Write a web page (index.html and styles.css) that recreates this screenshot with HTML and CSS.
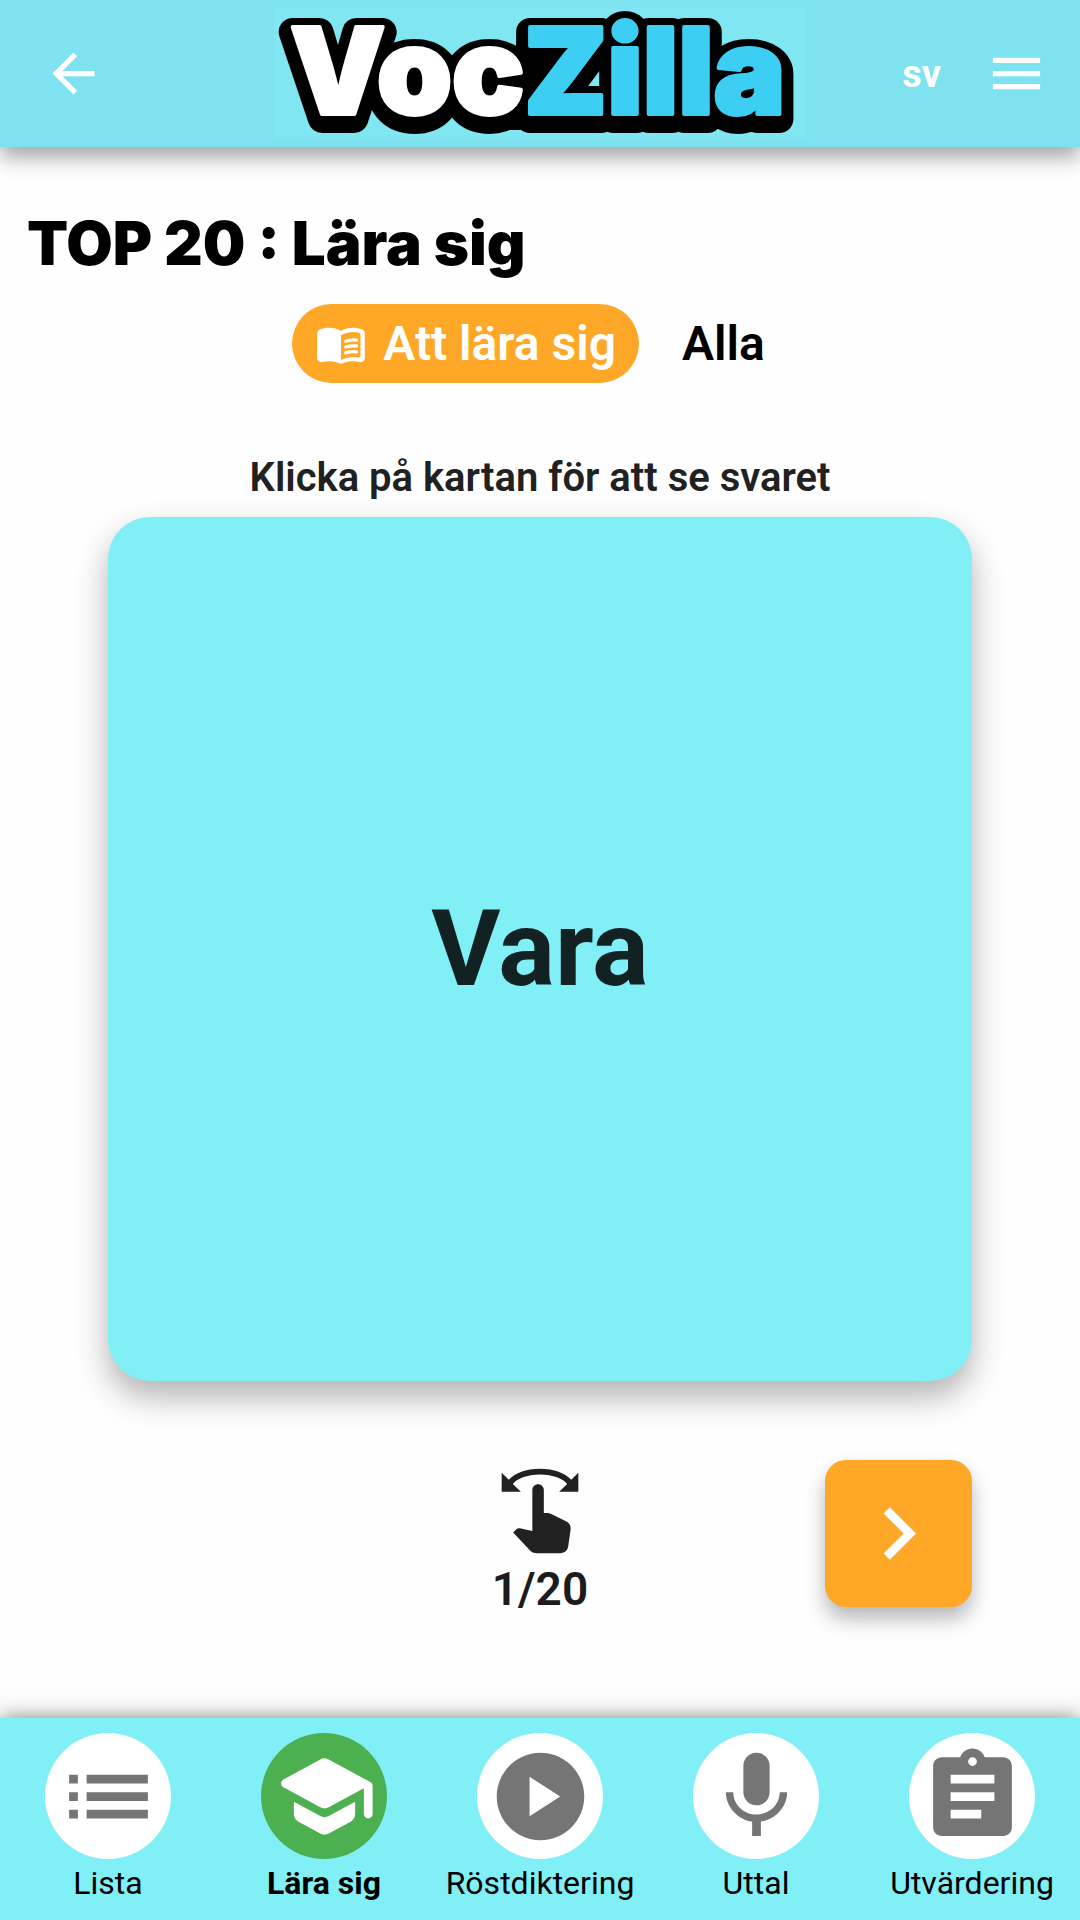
FILE: index.html
```html
<!DOCTYPE html>
<html lang="sv">
<head>
<meta charset="utf-8">
<meta name="viewport" content="width=device-width, initial-scale=1">
<title>VocZilla</title>
<link rel="stylesheet" href="styles.css">
</head>
<body>
<header class="topbar">
  <button class="icon-button back" type="button" aria-label="Tillbaka">
    <svg class="icon" viewBox="0 0 24 24"><path d="M20 11H7.83l5.59-5.59L12 4l-8 8 8 8 1.41-1.41L7.83 13H20v-2z"/></svg>
  </button>
  <svg class="logo" viewBox="0 0 532 131" role="img" aria-label="VocZilla">
    <defs>
      <text id="voc" x="16" y="106">Voc</text>
      <text id="zilla" x="250" y="106">Zilla</text>
    </defs>
    <g class="logo-shade">
      <use href="#voc" y="5"/>
      <use href="#zilla" y="5"/>
      <path d="M220 60h40v48h-40z"/>
    </g>
    <use class="logo-white" href="#voc"/>
    <use class="logo-blue" href="#zilla"/>
  </svg>
  <div class="topbar-end">
    <button class="language" type="button">sv</button>
    <button class="icon-button" type="button" aria-label="Meny">
      <svg class="icon" viewBox="0 0 24 24"><path d="M3 18h18v-2H3v2zm0-5h18v-2H3v2zm0-7v2h18V6H3z"/></svg>
    </button>
  </div>
</header>

<main class="content">
  <h1 class="title">TOP 20 : Lära sig</h1>
  <div class="filters">
    <button class="filter filter-active" type="button">
      <svg class="filter-icon" viewBox="0 0 24 24">
        <path d="M17.5 4.5c-1.95 0-4.05.4-5.5 1.5-1.45-1.1-3.55-1.5-5.5-1.5-1.45 0-2.99.22-4.28.79C1.49 5.62 1 6.33 1 7.14v11.28c0 1.3 1.22 2.26 2.48 1.94.98-.25 2.02-.36 3.02-.36 1.56 0 3.22.26 4.56.92.6.3 1.28.3 1.87 0 1.34-.67 3-.92 4.56-.92 1 0 2.04.11 3.02.36 1.26.33 2.48-.63 2.48-1.94V7.14c0-.81-.49-1.52-1.22-1.85-1.28-.57-2.82-.79-4.27-.79zM21 17.23c0 .63-.58 1.09-1.2.98-.75-.14-1.53-.2-2.3-.2-1.7 0-4.15.65-5.5 1.5V8c1.35-.85 3.8-1.5 5.5-1.5.92 0 1.83.09 2.7.28.46.1.8.51.8.98v9.47z"/>
        <path class="filter-lines" d="M14.2 10.7q2.5-.8 5-.5M14.2 13.4q2.5-.8 5-.5M14.2 16.1q2.5-.8 5-.5"/>
      </svg>
      Att lära sig
    </button>
    <button class="filter" type="button">Alla</button>
  </div>
  <p class="hint">Klicka på kartan för att se svaret</p>
  <button class="card" type="button">Vara</button>
  <div class="controls">
    <div class="progress">
      <svg class="swipe" viewBox="0 0 24 24">
        <path d="M20.13 3.87C18.69 2.17 15.6 1 12 1S5.31 2.17 3.87 3.87L2 2v5h5L4.93 4.93c1-1.29 3.7-2.43 7.07-2.43s6.07 1.14 7.07 2.43L17 7h5V2l-1.87 1.87z"/>
        <path d="M18.89 14.75l-4.09-2.04c-.28-.14-.58-.21-.89-.21H13v-6C13 5.67 12.33 5 11.5 5S10 5.67 10 6.5v10.74L6.75 16.5c-.33-.07-.68.03-.92.28L5 17.62l4.54 4.79c.38.38 1.14.59 1.67.59h6.16c1 0 1.84-.73 1.98-1.72l.63-4.46c.12-.85-.32-1.69-1.09-2.07z"/>
      </svg>
      <span class="counter">1/20</span>
    </div>
    <button class="next" type="button" aria-label="Nästa">
      <svg class="big-icon" viewBox="0 0 24 24"><path d="M10 6L8.59 7.41 13.17 12l-4.58 4.59L10 18l6-6z"/></svg>
    </button>
  </div>
</main>

<nav class="tabs">
  <a class="tab" href="#lista">
    <span class="disc"><svg class="big-icon" viewBox="0 0 24 24"><path d="M3 13h2v-2H3v2zm0 4h2v-2H3v2zm0-8h2V7H3v2zm4 4h14v-2H7v2zm0 4h14v-2H7v2zM7 7v2h14V7H7z"/></svg></span>
    Lista
  </a>
  <a class="tab tab-active" href="#lara" aria-current="page">
    <span class="disc"><svg class="big-icon" viewBox="0 0 24 24"><path d="M5 13.18v2.81c0 .73.4 1.41 1.04 1.76l5 2.73c.6.33 1.32.33 1.92 0l5-2.73c.64-.35 1.04-1.03 1.04-1.76v-2.81l-6.04 3.3c-.6.33-1.32.33-1.92 0L5 13.18zm6.04-9.66l-8.43 4.6c-.69.38-.69 1.38 0 1.76l8.43 4.6c.6.33 1.32.33 1.92 0L21 10.09V16c0 .55.45 1 1 1s1-.45 1-1V9.59c0-.37-.2-.7-.52-.88l-9.52-5.19c-.6-.32-1.32-.32-1.92 0z"/></svg></span>
    Lära sig
  </a>
  <a class="tab" href="#rostdiktering">
    <span class="disc"><svg class="big-icon" viewBox="0 0 24 24"><path d="M12 2C6.48 2 2 6.48 2 12s4.48 10 10 10 10-4.48 10-10S17.52 2 12 2zM9.5 16.5v-9l7 4.5z"/></svg></span>
    Röstdiktering
  </a>
  <a class="tab" href="#uttal">
    <span class="disc"><svg class="big-icon" viewBox="0 0 24 24"><path d="M12 14c1.66 0 2.99-1.34 2.99-3L15 5c0-1.66-1.34-3-3-3S9 3.34 9 5v6c0 1.66 1.34 3 3 3zm5.3-3c0 3-2.54 5.1-5.3 5.1S6.7 14 6.7 11H5c0 3.41 2.72 6.23 6 6.72V21h2v-3.28c3.28-.48 6-3.3 6-6.72h-1.7z"/></svg></span>
    Uttal
  </a>
  <a class="tab" href="#utvardering">
    <span class="disc"><svg class="big-icon" viewBox="0 0 24 24"><path d="M19 3h-4.18C14.4 1.84 13.3 1 12 1c-1.3 0-2.4.84-2.82 2H5c-1.1 0-2 .9-2 2v14c0 1.1.9 2 2 2h14c1.1 0 2-.9 2-2V5c0-1.1-.9-2-2-2zm-7 0c.55 0 1 .45 1 1s-.45 1-1 1-1-.45-1-1 .45-1 1-1zm2 14H7v-2h7v2zm3-4H7v-2h10v2zm0-4H7V7h10v2z"/></svg></span>
    Utvärdering
  </a>
</nav>
</body>
</html>
```
FILE: styles.css
```css
* {
  box-sizing: border-box;
}

body {
  margin: 0;
  min-height: 100vh;
  display: flex;
  flex-direction: column;
  background: #fefefe;
  color: #212121;
  font-family: Roboto, "Noto Sans", sans-serif;
}

button {
  border: 0;
  padding: 0;
  background: none;
  font: inherit;
  color: inherit;
  cursor: pointer;
}

svg {
  display: block;
  fill: currentColor;
}

/* Top bar */
.topbar {
  display: grid;
  grid-template-columns: 1fr auto 1fr;
  align-items: center;
  height: 147px;
  padding: 0 32px;
  background: #7ee2f0;
  color: #fff;
  box-shadow: 0 10px 20px rgba(0, 0, 0, 0.36);
}

.icon {
  width: 63px;
  height: 63px;
}

.icon-button {
  justify-self: start;
}

.back {
  padding-left: 10px;
}

.logo {
  width: 532px;
  height: 131px;
  overflow: visible;
  background: #80e7f2;
  font-family: Inter, sans-serif;
  font-weight: 900;
  font-size: 120px;
  stroke-linejoin: round;
}

.logo-shade {
  fill: #000;
  stroke: #000;
  stroke-width: 28px;
}

.logo-white {
  fill: #fff;
  stroke: #fff;
  stroke-width: 4px;
}

.logo-blue {
  fill: #3dcff3;
  stroke: #3dcff3;
  stroke-width: 4px;
}

.topbar-end {
  display: flex;
  align-items: center;
  justify-content: flex-end;
  gap: 44px;
}

.language {
  font-size: 38px;
  line-height: 48px;
  font-weight: 700;
}

/* Content */
.content {
  flex: 1;
  display: flex;
  flex-direction: column;
  align-items: center;
  padding: 60px 0 48px;
}

.title {
  align-self: stretch;
  margin: 0;
  padding: 0 27px;
  color: #000;
  font-family: Inter, sans-serif;
  font-size: 60px;
  line-height: 72px;
  font-weight: 900;
}

.filters {
  display: flex;
  gap: 20px;
  margin-top: 25px;
}

.filter {
  display: flex;
  align-items: center;
  gap: 16px;
  height: 79px;
  padding: 0 23px;
  border-radius: 40px;
  color: #000;
  font-size: 48px;
  font-weight: 600;
}

.filter-active {
  background: #ffa726;
  color: #fff;
}

.filter-icon {
  width: 52px;
  height: 52px;
}

.filter-lines {
  fill: none;
  stroke: currentColor;
  stroke-width: 1.5;
  stroke-linecap: round;
}

.hint {
  margin: 71px 0 15px;
  font-size: 40px;
  line-height: 48px;
  font-weight: 600;
}

.card {
  width: 80%;
  aspect-ratio: 1;
  border-radius: 42px;
  background: #80eff6;
  color: #122122;
  font-size: 106px;
  font-weight: 700;
  box-shadow: 0 16px 32px rgba(0, 0, 0, 0.3);
}

.controls {
  display: grid;
  grid-template-columns: 1fr auto 1fr;
  width: 80%;
  margin-top: 79px;
}

.progress {
  grid-column: 2;
  display: flex;
  flex-direction: column;
  align-items: center;
  gap: 8px;
  padding-top: 5px;
}

.swipe {
  width: 92px;
  height: 92px;
}

.counter {
  color: #1c1b20;
  font-size: 46px;
  line-height: 48px;
  font-weight: 600;
}

.next {
  justify-self: end;
  display: grid;
  place-items: center;
  width: 147px;
  height: 147px;
  border-radius: 21px;
  background: #ffa726;
  color: #fff;
  box-shadow: 0 12px 20px rgba(0, 0, 0, 0.28);
}

.big-icon {
  width: 105px;
  height: 105px;
}

/* Bottom tabs */
.tabs {
  display: grid;
  grid-template-columns: repeat(5, 1fr);
  padding: 15px 0 19px;
  background: #80eff6;
  box-shadow: 0 0 20px rgba(0, 0, 0, 0.5);
}

.tab {
  display: flex;
  flex-direction: column;
  align-items: center;
  gap: 6px;
  color: #000;
  font-size: 32px;
  line-height: 36px;
  text-decoration: none;
}

.tab-active {
  font-weight: 700;
}

.disc {
  display: grid;
  place-items: center;
  width: 126px;
  height: 126px;
  border-radius: 50%;
  background: #fff;
  color: #757575;
}

.tab-active .disc {
  background: #4caf50;
  color: #fff;
}
```
